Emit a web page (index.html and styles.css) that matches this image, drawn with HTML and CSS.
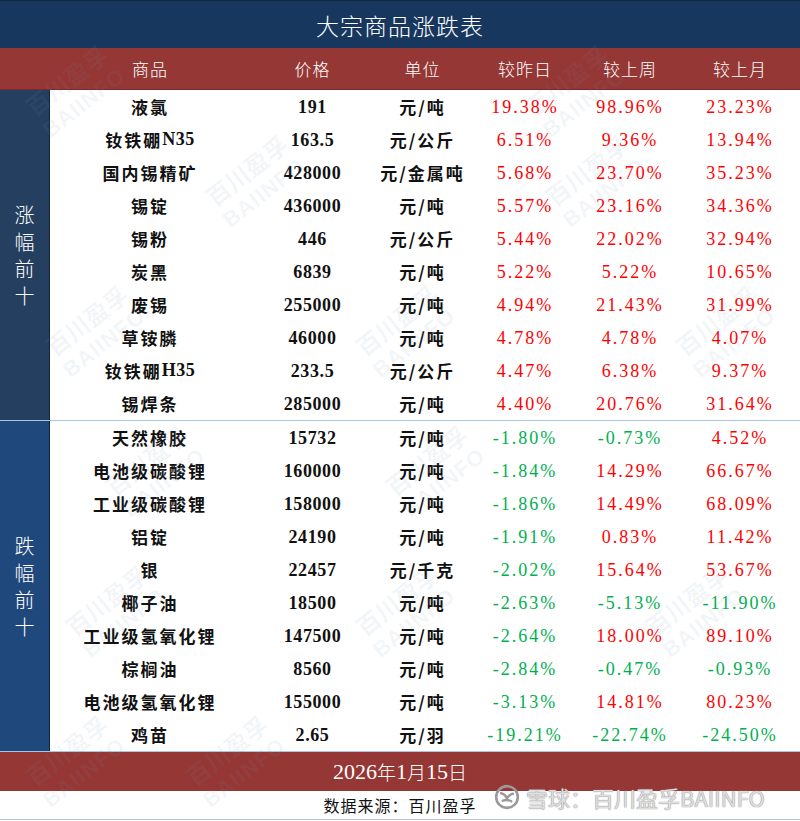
FILE: index.html
```html
<!DOCTYPE html>
<html lang="zh">
<head>
<meta charset="utf-8">
<title>大宗商品涨跌表</title>
<link rel="stylesheet" href="styles.css">
</head>
<body>
<div class="page">
  <div class="title">大宗商品涨跌表</div>
  <div class="head">
    <div class="hside"></div>
    <div class="grid">
      <div>商品</div><div>价格</div><div>单位</div><div>较昨日</div><div>较上周</div><div>较上月</div>
    </div>
  </div>
  <div class="section up">
    <div class="side"><span>涨</span><span>幅</span><span>前</span><span>十</span></div>
    <div class="rows">
      <div class="grid row"><div class="name">液氯</div><div class="num">191</div><div class="name">元/吨</div><div class="r">19.38%</div><div class="r">98.96%</div><div class="r">23.23%</div></div>
      <div class="grid row"><div class="name">钕铁硼<span class="lat">N35</span></div><div class="num">163.5</div><div class="name">元/公斤</div><div class="r">6.51%</div><div class="r">9.36%</div><div class="r">13.94%</div></div>
      <div class="grid row"><div class="name">国内锡精矿</div><div class="num">428000</div><div class="name">元/金属吨</div><div class="r">5.68%</div><div class="r">23.70%</div><div class="r">35.23%</div></div>
      <div class="grid row"><div class="name">锡锭</div><div class="num">436000</div><div class="name">元/吨</div><div class="r">5.57%</div><div class="r">23.16%</div><div class="r">34.36%</div></div>
      <div class="grid row"><div class="name">锡粉</div><div class="num">446</div><div class="name">元/公斤</div><div class="r">5.44%</div><div class="r">22.02%</div><div class="r">32.94%</div></div>
      <div class="grid row"><div class="name">炭黑</div><div class="num">6839</div><div class="name">元/吨</div><div class="r">5.22%</div><div class="r">5.22%</div><div class="r">10.65%</div></div>
      <div class="grid row"><div class="name">废锡</div><div class="num">255000</div><div class="name">元/吨</div><div class="r">4.94%</div><div class="r">21.43%</div><div class="r">31.99%</div></div>
      <div class="grid row"><div class="name">草铵膦</div><div class="num">46000</div><div class="name">元/吨</div><div class="r">4.78%</div><div class="r">4.78%</div><div class="r">4.07%</div></div>
      <div class="grid row"><div class="name">钕铁硼<span class="lat">H35</span></div><div class="num">233.5</div><div class="name">元/公斤</div><div class="r">4.47%</div><div class="r">6.38%</div><div class="r">9.37%</div></div>
      <div class="grid row"><div class="name">锡焊条</div><div class="num">285000</div><div class="name">元/吨</div><div class="r">4.40%</div><div class="r">20.76%</div><div class="r">31.64%</div></div>
    </div>
  </div>
  <div class="section down">
    <div class="side"><span>跌</span><span>幅</span><span>前</span><span>十</span></div>
    <div class="rows">
      <div class="grid row"><div class="name">天然橡胶</div><div class="num">15732</div><div class="name">元/吨</div><div class="g">-1.80%</div><div class="g">-0.73%</div><div class="r">4.52%</div></div>
      <div class="grid row"><div class="name">电池级碳酸锂</div><div class="num">160000</div><div class="name">元/吨</div><div class="g">-1.84%</div><div class="r">14.29%</div><div class="r">66.67%</div></div>
      <div class="grid row"><div class="name">工业级碳酸锂</div><div class="num">158000</div><div class="name">元/吨</div><div class="g">-1.86%</div><div class="r">14.49%</div><div class="r">68.09%</div></div>
      <div class="grid row"><div class="name">铝锭</div><div class="num">24190</div><div class="name">元/吨</div><div class="g">-1.91%</div><div class="r">0.83%</div><div class="r">11.42%</div></div>
      <div class="grid row"><div class="name">银</div><div class="num">22457</div><div class="name">元/千克</div><div class="g">-2.02%</div><div class="r">15.64%</div><div class="r">53.67%</div></div>
      <div class="grid row"><div class="name">椰子油</div><div class="num">18500</div><div class="name">元/吨</div><div class="g">-2.63%</div><div class="g">-5.13%</div><div class="g">-11.90%</div></div>
      <div class="grid row"><div class="name">工业级氢氧化锂</div><div class="num">147500</div><div class="name">元/吨</div><div class="g">-2.64%</div><div class="r">18.00%</div><div class="r">89.10%</div></div>
      <div class="grid row"><div class="name">棕榈油</div><div class="num">8560</div><div class="name">元/吨</div><div class="g">-2.84%</div><div class="g">-0.47%</div><div class="g">-0.93%</div></div>
      <div class="grid row"><div class="name">电池级氢氧化锂</div><div class="num">155000</div><div class="name">元/吨</div><div class="g">-3.13%</div><div class="r">14.81%</div><div class="r">80.23%</div></div>
      <div class="grid row"><div class="name">鸡苗</div><div class="num">2.65</div><div class="name">元/羽</div><div class="g">-19.21%</div><div class="g">-22.74%</div><div class="g">-24.50%</div></div>
    </div>
  </div>
  <div class="date"><span class="lat">2026</span>年<span class="lat">1</span>月<span class="lat">15</span>日</div>
  <div class="source">数据来源：百川盈孚</div>

  <div class="wm" style="left:20px;top:100px">百川盈孚<br><b>BAIINFO</b></div>
  <div class="wm" style="left:520px;top:100px">百川盈孚<br><b>BAIINFO</b></div>
  <div class="wm" style="left:200px;top:190px">百川盈孚<br><b>BAIINFO</b></div>
  <div class="wm" style="left:540px;top:190px">百川盈孚<br><b>BAIINFO</b></div>
  <div class="wm" style="left:40px;top:340px">百川盈孚<br><b>BAIINFO</b></div>
  <div class="wm" style="left:350px;top:340px">百川盈孚<br><b>BAIINFO</b></div>
  <div class="wm" style="left:670px;top:340px">百川盈孚<br><b>BAIINFO</b></div>
  <div class="wm" style="left:100px;top:480px">百川盈孚<br><b>BAIINFO</b></div>
  <div class="wm" style="left:380px;top:480px">百川盈孚<br><b>BAIINFO</b></div>
  <div class="wm" style="left:60px;top:620px">百川盈孚<br><b>BAIINFO</b></div>
  <div class="wm" style="left:350px;top:620px">百川盈孚<br><b>BAIINFO</b></div>
  <div class="wm" style="left:640px;top:620px">百川盈孚<br><b>BAIINFO</b></div>
  <div class="wm" style="left:20px;top:770px">百川盈孚<br><b>BAIINFO</b></div>
  <div class="wm" style="left:180px;top:770px">百川盈孚<br><b>BAIINFO</b></div>

  <div class="xq">
    <svg class="xqlogo" viewBox="0 0 24 24" width="26" height="26" aria-hidden="true">
      <circle cx="12" cy="12" r="10" fill="none" stroke="#9a9a9a" stroke-width="2.4"/>
      <path d="M6.5 8.5 C9 9, 11 11, 12 13.5 C13 11, 15 9.5, 17.5 9" fill="none" stroke="#9a9a9a" stroke-width="2.2" stroke-linecap="round"/>
      <path d="M8 15.5 C10 14.5, 14 14.5, 16 16" fill="none" stroke="#9a9a9a" stroke-width="2.2" stroke-linecap="round"/>
    </svg>
    <span>雪球：百川盈孚BAIINFO</span>
  </div>
</div>
</body>
</html>
```

FILE: styles.css
```css
* { box-sizing: border-box; }
html, body { margin: 0; padding: 0; background: #ffffff; }
body {
  font-family: "Liberation Serif", "Noto Sans CJK SC", serif;
  width: 800px;
  height: 821px;
  overflow: hidden;
}
.page {
  position: relative;
  width: 800px;
  height: 821px;
  overflow: hidden;
}
.title {
  height: 48px;
  background: #17375e;
  border-top: 1px solid #0e2440;
  color: #ffffff;
  font-family: "Noto Sans CJK SC", sans-serif;
  font-size: 23px;
  font-weight: 300;
  letter-spacing: 1px;
  display: flex;
  align-items: center;
  justify-content: center;
}
.head {
  height: 42px;
  background: #953735;
  display: flex;
  border-bottom: 1px solid #7a2a29;
}
.hside { width: 50px; }
.grid {
  display: grid;
  grid-template-columns: 200px 125px 95px 110px 100px 120px;
  width: 750px;
}
.head .grid > div {
  display: flex;
  align-items: center;
  justify-content: center;
  color: #ffffff;
  font-family: "Noto Sans CJK SC", sans-serif;
  font-size: 17px;
  font-weight: 300;
  letter-spacing: 1px;
}
.section {
  display: flex;
  height: 331px;
}
.up { border-bottom: 1px solid #a9c6e8; }
.side {
  width: 50px;
  border-right: 1px solid #10233d;
  display: flex;
  flex-direction: column;
  align-items: center;
  justify-content: center;
  color: #ffffff;
  font-family: "Noto Sans CJK SC", sans-serif;
  font-size: 20px;
  font-weight: 300;
  line-height: 27px;
}
.up .side { background: #243f60; }
.down .side { background: #1f497d; height: 330px; }
.down { height: 330px; }
.rows { display: flex; flex-direction: column; }
.row { height: 33.1px; }
.down .row { height: 33px; }
.row > div {
  display: flex;
  align-items: center;
  justify-content: center;
  font-size: 17px;
  white-space: nowrap;
}
.name {
  font-family: "Noto Sans CJK SC", sans-serif;
  font-weight: 700;
  color: #111111;
  letter-spacing: 2px;
}
.name .lat { font-family: "Liberation Serif", serif; font-weight: 700; letter-spacing: 0.5px; font-size: 18px; }
.num {
  font-weight: 700;
  color: #111111;
  font-size: 18px !important;
  letter-spacing: 0.6px;
  padding-top: 2px;
}
.r, .g {
  font-size: 18px !important;
  letter-spacing: 2px;
  padding-top: 2px;
}
.r { color: #ff0000; }
.g { color: #00b050; }
.date {
  height: 40px;
  background: #953735;
  border-top: 1px solid #a9c6e8;
  color: #ffffff;
  display: flex;
  align-items: center;
  justify-content: center;
  font-family: "Noto Sans CJK SC", sans-serif;
  font-weight: 300;
  font-size: 19px;
}
.date .lat { font-family: "Liberation Serif", serif; font-size: 22px; }
.source {
  height: 29px;
  border-bottom: 1px solid #a9c6e8;
  display: flex;
  align-items: center;
  justify-content: center;
  font-family: "Noto Sans CJK SC", sans-serif;
  font-size: 16px;
  color: #111111;
  letter-spacing: 1px;
}
.wm {
  position: absolute;
  transform: rotate(-38deg);
  transform-origin: left top;
  color: rgba(120, 150, 185, 0.09);
  font-family: "Noto Sans CJK SC", sans-serif;
  font-size: 24px;
  font-weight: 700;
  line-height: 26px;
  text-align: center;
  pointer-events: none;
  white-space: nowrap;
}
.wm b { font-family: "Liberation Sans", sans-serif; font-size: 22px; letter-spacing: 1px; }
.xq {
  position: absolute;
  left: 494px;
  top: 781px;
  display: flex;
  align-items: center;
  gap: 6px;
  color: rgba(255, 255, 255, 0.72);
  font-family: "Noto Sans CJK SC", sans-serif;
  font-size: 22px;
  font-weight: 400;
  text-shadow: 0 0 1px #8a8a8a, 0 0 1px #8a8a8a;
  white-space: nowrap;
}
.xqlogo { flex: none; }
```
